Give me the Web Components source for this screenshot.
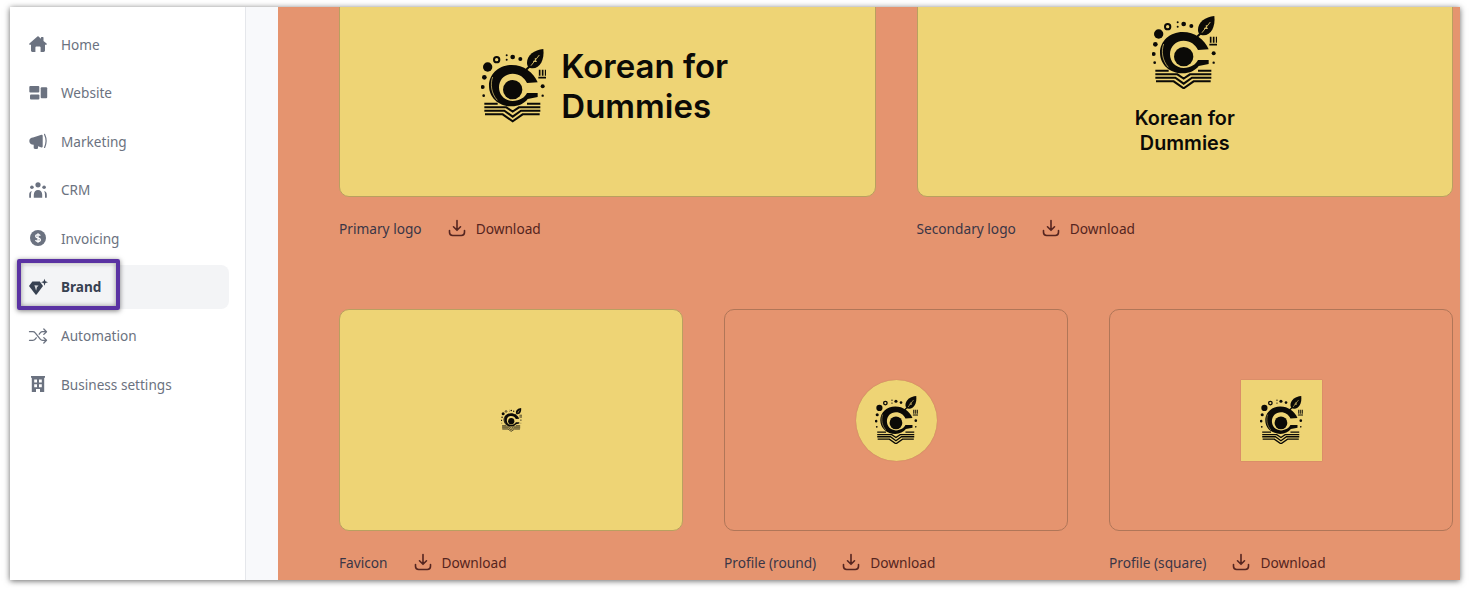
<!DOCTYPE html>
<html>
<head>
<meta charset="utf-8">
<title>Brand</title>
<style>
  html, body { margin: 0; height: 100%; background: #fff; }
  body { padding: 7px 10px 13px; box-sizing: border-box; font-family: "Noto Sans", sans-serif; overflow: hidden; }
</style>
</head>
<body>
<app-shell>
  <side-nav slot="nav">
    <nav-item icon="home">Home</nav-item>
    <nav-item icon="website">Website</nav-item>
    <nav-item icon="marketing">Marketing</nav-item>
    <nav-item icon="crm">CRM</nav-item>
    <nav-item icon="invoicing">Invoicing</nav-item>
    <nav-item icon="brand" active>Brand</nav-item>
    <nav-item icon="automation">Automation</nav-item>
    <nav-item icon="settings">Business settings</nav-item>
  </side-nav>
  <asset-grid columns="2">
    <asset-tile label="Primary logo" tone="yellow"><logo-lockup layout="row"></logo-lockup></asset-tile>
    <asset-tile label="Secondary logo" tone="yellow"><logo-lockup layout="column"></logo-lockup></asset-tile>
  </asset-grid>
  <asset-grid columns="3">
    <asset-tile label="Favicon" tone="yellow"><brand-mark style="width:21px"></brand-mark></asset-tile>
    <asset-tile label="Profile (round)" tone="orange"><logo-chip round></logo-chip></asset-tile>
    <asset-tile label="Profile (square)" tone="orange"><logo-chip></logo-chip></asset-tile>
  </asset-grid>
</app-shell>

<script>
const NAV_ICONS = {
  home: '<path d="M9.6.4a1 1 0 0 0-1.2 0L.4 7.4c-.5.5-.2 1.3.5 1.3H2v5.9c0 .8.6 1.4 1.4 1.4h3V11.4c0-.5.4-.9.9-.9h3.4c.5 0 .9.4.9.9V16h3c.8 0 1.4-.6 1.4-1.4V8.7h1.1c.7 0 1-.8.5-1.3L14.500 5V1.600c0-.4-.3-.7-.7-.7h-1.200c-.4 0-.7.3-.7.7v1.100z"/>',
  website: '<rect x=".3" y="1" width="10" height="6.400" rx="1"/><rect x="1" y="9.600" width="9.400" height="5" rx="1"/><rect x="11.700" y="2.300" width="6.500" height="11" rx="1"/>',
  marketing: '<path d="M.3 8C.3 5.500 2 4.500 4 4.400L12.500 1.800c.7-.2 1.200.3 1.200.9V13.500c0 .6-.5 1.100-1.200.9L9 13.300v1.500c0 .8-.6 1.200-1.300 1.200H6c-.8 0-1.300-.5-1.300-1.200v-3C2 11.500.3 10.500.3 8z"/><path d="M15.600 1.400c1.800 3.800 1.800 9 0 13" fill="none" stroke="currentColor" stroke-width="1.200" stroke-linecap="round"/>',
  crm: '<circle cx="9" cy="2.800" r="2.600"/><circle cx="2.900" cy="5.300" r="1.800"/><circle cx="15.100" cy="5.300" r="1.800"/><path d="M4.800 15.800v-3c0-3 1.800-4.800 4.200-4.800s4.200 1.800 4.200 4.800v3z"/><path d="M.2 15.800v-3c0-2 1-3.400 2.600-3.700-.6 1-.8 2.200-.8 3.600v3.100zM17.800 15.800v-3c0-2-1-3.400-2.600-3.700.6 1 .8 2.200.8 3.600v3.100z"/>',
  invoicing: '<circle cx="9" cy="8" r="8"/><path d="M11.300 5.700C10.800 4.900 10 4.600 9 4.600c-1.300 0-2.300.6-2.300 1.700 0 2.400 4.700 1 4.700 3.400 0 1.100-1 1.700-2.400 1.700-1.100 0-2-.4-2.500-1.200M9 3.300v9.400" fill="none" stroke="#fff" stroke-width="1.300"/>',
  brand: '<path d="M3.400 2.500h7.400l3.200 4.400-6.400 8.500a.7.7 0 0 1-1.100 0L0 6.900z"/><path d="M5.400 6.200 7.100 11.800 8 8.200 9.600 6.600z" fill="#d5d7db"/><path d="M15.500-.3l.9 2.600 2.600.9-2.600.9-.9 2.600-.9-2.600-2.600-.9 2.600-.9z"/>',
  automation: '<path d="M.5 3.700h3.300c1 0 1.800.4 2.400 1.200l5 6.200c.6.800 1.400 1.200 2.400 1.200h3.600M.5 12.300h3.300c1 0 1.800-.4 2.400-1.200l1-1.300M10.200 6.200l1-1.300c.6-.8 1.400-1.200 2.400-1.200h3.600M14.800 1l2.700 2.700-2.700 2.700M14.800 9.600l2.700 2.700-2.700 2.700" fill="none" stroke="currentColor" stroke-width="1.300" stroke-linecap="round" stroke-linejoin="round"/>',
  settings: '<path fill-rule="evenodd" d="M2 0h14v1.800h-.8V16H11v-3H7v3H2.800V1.800H2zM5.200 3.500v3h2.800v-3zM10 3.500v3h2.800v-3zM5.200 8.200v3h2.800v-3zM10 8.200v3h2.800v-3z"/>'
};

class AppShell extends HTMLElement {
  connectedCallback() {
    this.attachShadow({ mode: 'open' });
    this.shadowRoot.innerHTML = `
      <style>
        :host {
          display: flex;
          height: 573px;
          position: relative;
          overflow: hidden;
          background: #f8f9fb;
          box-shadow: 0 1px 6px rgba(0, 0, 0, .6);
        }
        .gutter { width: 32px; flex: none; }
        main {
          flex: 1;
          min-width: 0;
          background: #e5946f;
          padding: 0 7px 0 61px;
          overflow: hidden;
        }
        .scroll { margin-top: -32px; display: flex; flex-direction: column; gap: 71px; }
        .callout {
          position: absolute;
          left: 7px;
          top: 252px;
          width: 95px;
          height: 43px;
          border: 4px solid #5a32a3;
          border-radius: 2px;
          box-shadow: 0 1px 5px rgba(0, 0, 0, .5), inset 0 0 5px rgba(0, 0, 0, .4);
        }
      </style>
      <slot name="nav"></slot>
      <div class="gutter"></div>
      <main><div class="scroll"><slot></slot></div></main>
      <div class="callout"></div>
    `;
  }
}

class SideNav extends HTMLElement {
  connectedCallback() {
    this.attachShadow({ mode: 'open' });
    this.shadowRoot.innerHTML = `
      <style>
        :host {
          display: flex;
          flex-direction: column;
          gap: 4.6px;
          flex: none;
          box-sizing: border-box;
          width: 236px;
          padding: 15px 16px 0 7px;
          background: #fff;
          border-right: 1px solid #e5e7eb;
        }
      </style>
      <slot></slot>
    `;
  }
}

class NavItem extends HTMLElement {
  connectedCallback() {
    this.attachShadow({ mode: 'open' });
    const icon = NAV_ICONS[this.getAttribute('icon')] || '';
    this.shadowRoot.innerHTML = `
      <style>
        :host {
          display: flex;
          align-items: center;
          gap: 14px;
          height: 44px;
          padding-left: 12px;
          border-radius: 8px;
          color: #6b7280;
          font-size: 13.600px;
        }
        :host([active]) { background: #f3f4f6; color: #374151; font-weight: 700; }
        svg { width: 18px; height: 16px; fill: currentColor; flex: none; overflow: visible; }
      </style>
      <svg viewBox="0 0 18 16">${icon}</svg>
      <slot></slot>
    `;
  }
}

class AssetGrid extends HTMLElement {
  connectedCallback() {
    this.attachShadow({ mode: 'open' });
    const columns = this.getAttribute('columns') || 2;
    this.shadowRoot.innerHTML = `
      <style>
        :host { display: grid; grid-template-columns: repeat(${columns}, 1fr); column-gap: 41px; }
      </style>
      <slot></slot>
    `;
  }
}

class AssetTile extends HTMLElement {
  connectedCallback() {
    this.attachShadow({ mode: 'open' });
    this.shadowRoot.innerHTML = `
      <style>
        :host { display: block; min-width: 0; font-size: 13.700px; }
        .card {
          box-sizing: border-box;
          height: 222px;
          display: flex;
          align-items: center;
          justify-content: center;
          border-radius: 10px;
          border: 1px solid #b07658;
        }
        :host([tone="yellow"]) .card { background: #eed475; border-color: #b9a05f; }
        .meta { display: flex; align-items: center; height: 20px; margin-top: 21px; }
        .label { color: #3a3646; margin-right: 26px; }
        .dl { display: flex; align-items: center; gap: 10px; color: #552520; }
        svg { width: 18px; height: 18px; fill: none; stroke: currentColor; stroke-width: 1.600; stroke-linecap: round; stroke-linejoin: round; }
      </style>
      <div class="card"><slot></slot></div>
      <div class="meta">
        <span class="label">${this.getAttribute('label')}</span>
        <span class="dl">
          <svg viewBox="0 0 18 18"><path d="M9 1.500v9.500M5.500 7.800 9 11.300l3.500-3.500M1.500 11.500v1.800c0 1.800 1.400 3.200 3.200 3.200h8.600c1.800 0 3.200-1.400 3.200-3.200v-1.800"/></svg>
          Download
        </span>
      </div>
    `;
  }
}

class BrandMark extends HTMLElement {
  connectedCallback() {
    this.attachShadow({ mode: 'open' });
    this.shadowRoot.innerHTML = `
      <style>
        :host { display: block; width: 65px; flex: none; }
        svg { display: block; width: 100%; height: auto; color: #0b0a07; }
      </style>
      <svg viewBox="20 28 195 220" fill="currentColor">
        <!-- dots around the ring -->
        <circle cx="40" cy="82" r="14"/>
        <circle cx="67" cy="60" r="8" fill="none" stroke="currentColor" stroke-width="6"/>
        <circle cx="30" cy="113" r="7"/><circle cx="25" cy="142" r="6"/><circle cx="28" cy="168" r="4"/>
        <circle cx="97" cy="47" r="3"/><circle cx="97" cy="60" r="3"/>
        <circle cx="115" cy="52" r="7"/><circle cx="138" cy="58" r="6"/>
        <circle cx="205" cy="140" r="6"/><circle cx="205" cy="168" r="3.500"/>
        <!-- the C with its flat lower arm -->
        <path d="M190 128C178 98 148 76 112 76 73 76 44 104 44 138c0 36 30 62 68 62 20 0 38-8 48-22l30-6v-12h-32c-6 13-22 24-43 24-24 0-41-18-41-41s17-41 41-41c20 0 35 11 43 28z"/>
        <path d="M55 112c-8 22-4 50 14 70" fill="none" stroke="#eed475" stroke-width="2"/>
        <circle cx="115" cy="150" r="29"/>
        <!-- leaf -->
        <path d="M168 78 145 100" fill="none" stroke="currentColor" stroke-width="6"/>
        <path d="M207 28c-27 2-49 19-49 41 0 11 6 17 17 17 22 0 36-26 32-58z"/>
        <path d="M195 46 170 78M183 55v12M176 65h12" fill="none" stroke="#eed475" stroke-width="2.500"/>
        <!-- little bars right of the ring -->
        <path d="M196 90v18M205 90v18M214 90v18M192 114h24" fill="none" stroke="currentColor" stroke-width="5"/>
        <!-- book -->
        <g fill="none" stroke="currentColor" stroke-width="6">
          <path d="M30 192h40M158 192h40"/>
          <path d="M30 203h66l19 13 19-13h64"/>
          <path d="M30 213h60l25 18 25-18h58"/>
          <path d="M32 224h53l30 21 30-21h51"/>
        </g>
      </svg>
    `;
  }
}

class LogoLockup extends HTMLElement {
  connectedCallback() {
    this.attachShadow({ mode: 'open' });
    const row = this.getAttribute('layout') === 'row';
    this.shadowRoot.innerHTML = `
      <style>
        :host {
          display: flex;
          align-items: center;
          flex-direction: ${row ? 'row' : 'column'};
          gap: ${row ? '15px' : '17px'};
          ${row ? 'margin-right: 5px;' : ''}
          color: #0b0a07;
          font-family: Inter, sans-serif;
          font-weight: 600;
        }
        .name {
          font-size: ${row ? '33px' : '19.800px'};
          line-height: ${row ? '40px' : '25px'};
          text-align: ${row ? 'left' : 'center'};
        }
      </style>
      <brand-mark></brand-mark>
      <div class="name">Korean for<br>Dummies</div>
    `;
  }
}

class LogoChip extends HTMLElement {
  connectedCallback() {
    this.attachShadow({ mode: 'open' });
    this.shadowRoot.innerHTML = `
      <style>
        :host {
          display: flex;
          align-items: center;
          justify-content: center;
          width: 81px;
          height: 81px;
          background: #eed475;
          box-shadow: 0 0 1px rgba(120, 90, 40, .5);
        }
        :host([round]) { border-radius: 50%; }
      </style>
      <brand-mark style="width:43px"></brand-mark>
    `;
  }
}

customElements.define('brand-mark', BrandMark);
customElements.define('logo-lockup', LogoLockup);
customElements.define('logo-chip', LogoChip);
customElements.define('asset-tile', AssetTile);
customElements.define('asset-grid', AssetGrid);
customElements.define('nav-item', NavItem);
customElements.define('side-nav', SideNav);
customElements.define('app-shell', AppShell);
</script>
</body>
</html>
